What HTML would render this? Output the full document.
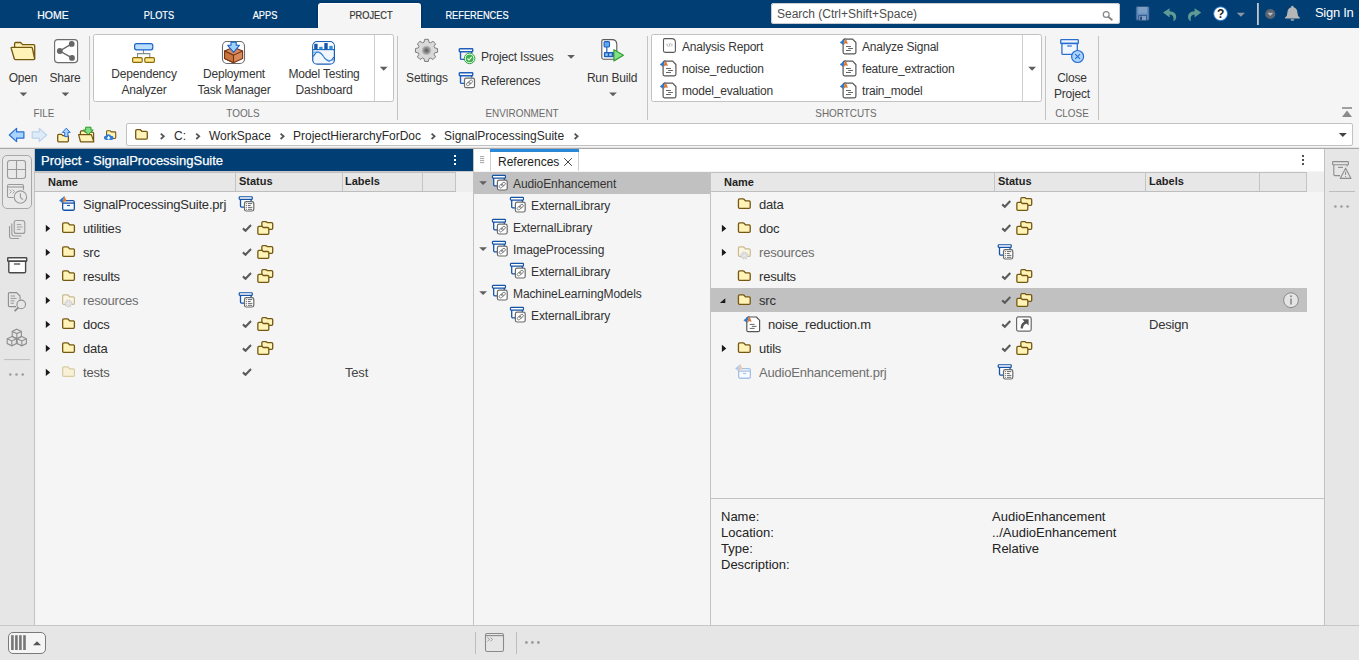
<!DOCTYPE html>
<html lang="en">
<head>
<meta charset="utf-8">
<title>Project - SignalProcessingSuite</title>
<style>
html,body{margin:0;padding:0;}
body{width:1359px;height:660px;overflow:hidden;background:#e6e6e6;font-family:"Liberation Sans",Arial,sans-serif;font-size:12px;color:#212121;position:relative;}
.a{position:absolute;}
.t{position:absolute;white-space:nowrap;line-height:16px;}
svg{position:absolute;overflow:visible;}
/* top bar */
#topbar{left:0;top:0;width:1359px;height:28px;background:#003e73;}
.tab{color:#fff;-webkit-text-stroke:0.2px currentColor;font-size:11px;line-height:16px;top:7px;text-align:center;transform:scaleX(.84);transform-origin:50% 50%;}
#acttab{left:318px;top:3px;width:103px;height:25px;background:#f5f5f5;border-radius:3px 3px 0 0;border:1px solid #fff;border-bottom:none;box-sizing:border-box;box-shadow:0 0 2px rgba(0,20,60,.7);}
#search{left:771px;top:3px;width:349px;height:21px;background:#fff;border-radius:3px;box-shadow:inset 0 0 0 1px #c9cdd2;}
/* toolstrip */
#strip{left:0;top:28px;width:1359px;height:95px;background:#f5f5f5;}
.sep{width:1px;background:#c4c4c4;top:36px;height:84px;}
.gal{background:#fff;border:1px solid #c2c2c2;border-radius:2.5px;box-sizing:border-box;top:34px;height:68px;}
.sl{font-size:11px;color:#6a6a6a;top:105px;text-align:center;transform:scaleX(.9);transform-origin:50% 50%;}
.bl{font-size:12px;color:#363636;text-align:center;letter-spacing:-0.2px;}
/* address bar */
#addr{left:0;top:123px;width:1359px;height:25px;background:#f5f5f5;}
#path{left:126px;top:123px;width:1227px;height:23px;background:#fff;border:1px solid #c2c2c2;border-radius:2px;box-sizing:border-box;}
.pt{font-size:12px;color:#2a2a2a;top:127.5px;}
/* body */
#leftbar{left:0;top:149px;width:35px;height:476px;background:#e6e6e6;}
#rightbar{left:1324px;top:149px;width:35px;height:476px;background:#e6e6e6;}
#status{left:0;top:625px;width:1359px;height:35px;background:#e6e6e6;border-top:1px solid #c6c6c6;box-sizing:border-box;}
.panel{background:#f5f5f5;}
.hdr{background:#e7e7e7;border-bottom:1px solid #bebebe;border-top:1px solid #c0c0c0;box-sizing:border-box;height:20px;top:172px;}
.hc{font-size:11px;font-weight:bold;color:#1f1f1f;top:174px;line-height:14px;}
.hd{width:1px;background:#c4c4c4;top:173px;height:18px;}
.n{font-size:13px;color:#2e2e2e;letter-spacing:-0.2px;margin-top:0.5px;}
.g{color:#6e6e6e;}
.r{font-size:12px;color:#333;letter-spacing:-0.1px;margin-top:1px;}
.d{font-size:13px;color:#222;}
</style>
</head>
<body>
<!-- ======= TOP BAR ======= -->
<div class="a" id="topbar"></div>
<div class="a" id="acttab"></div>
<span class="t tab" style="left:23px;width:60px;transform:scaleX(.95);">HOME</span>
<span class="t tab" style="left:129px;width:60px;">PLOTS</span>
<span class="t tab" style="left:235px;width:60px;">APPS</span>
<span class="t tab" style="left:331px;width:80px;color:#333;">PROJECT</span>
<span class="t tab" style="left:427px;width:100px;">REFERENCES</span>
<div class="a" id="search"></div>
<span class="t" style="left:777px;top:6px;font-size:12px;color:#4d4d4d;">Search (Ctrl+Shift+Space)</span>
<span class="t" style="left:1315px;top:5px;font-size:13px;color:#fff;letter-spacing:-0.3px;">Sign In</span>

<!-- ======= TOOLSTRIP ======= -->
<div class="a" id="strip"></div>
<div class="a sep" style="left:89px;"></div>
<div class="a sep" style="left:397px;"></div>
<div class="a sep" style="left:647px;"></div>
<div class="a sep" style="left:1045px;"></div>
<div class="a sep" style="left:1098px;"></div>
<div class="a gal" style="left:93px;width:301px;"></div>
<div class="a" style="left:374px;top:35px;width:1px;height:66px;background:#d0d0d0;"></div>
<div class="a gal" style="left:651px;width:391px;"></div>
<div class="a" style="left:1022px;top:35px;width:1px;height:66px;background:#d0d0d0;"></div>

<span class="t bl" style="left:0px;width:46px;top:70px;">Open</span>
<span class="t bl" style="left:42px;width:46px;top:70px;">Share</span>
<span class="t bl" style="left:99px;width:90px;top:66px;">Dependency</span>
<span class="t bl" style="left:99px;width:90px;top:82px;">Analyzer</span>
<span class="t bl" style="left:184px;width:100px;top:66px;">Deployment</span>
<span class="t bl" style="left:184px;width:100px;top:82px;">Task Manager</span>
<span class="t bl" style="left:274px;width:100px;top:66px;">Model Testing</span>
<span class="t bl" style="left:274px;width:100px;top:82px;">Dashboard</span>
<span class="t bl" style="left:397px;width:60px;top:70px;">Settings</span>
<span class="t bl" style="left:481px;top:48.5px;text-align:left;">Project Issues</span>
<span class="t bl" style="left:481px;top:72.5px;text-align:left;">References</span>
<span class="t bl" style="left:577px;width:70px;top:70px;">Run Build</span>
<span class="t bl" style="left:682px;top:39px;text-align:left;">Analysis Report</span>
<span class="t bl" style="left:682px;top:61px;text-align:left;">noise_reduction</span>
<span class="t bl" style="left:682px;top:83px;text-align:left;">model_evaluation</span>
<span class="t bl" style="left:862px;top:39px;text-align:left;">Analyze Signal</span>
<span class="t bl" style="left:862px;top:61px;text-align:left;">feature_extraction</span>
<span class="t bl" style="left:862px;top:83px;text-align:left;">train_model</span>
<span class="t bl" style="left:1042px;width:60px;top:70px;">Close</span>
<span class="t bl" style="left:1042px;width:60px;top:85.5px;">Project</span>

<span class="t sl" style="left:14px;width:60px;">FILE</span>
<span class="t sl" style="left:203px;width:80px;">TOOLS</span>
<span class="t sl" style="left:472px;width:100px;">ENVIRONMENT</span>
<span class="t sl" style="left:796px;width:100px;">SHORTCUTS</span>
<span class="t sl" style="left:1042px;width:60px;">CLOSE</span>

<!-- ======= ADDRESS BAR ======= -->
<div class="a" id="addr"></div>
<div class="a" id="path"></div>
<span class="t pt" style="left:174px;">C:</span>
<span class="t pt" style="left:209px;">WorkSpace</span>
<span class="t pt" style="left:293px;">ProjectHierarchyForDoc</span>
<span class="t pt" style="left:444px;">SignalProcessingSuite</span>
<div class="a" style="left:0;top:147px;width:1359px;height:1px;background:#e3e3e3;"></div><div class="a" style="left:0;top:148px;width:1359px;height:1px;background:#a9a9a9;"></div>

<!-- ======= BODY ======= -->
<div class="a" id="leftbar"></div>
<div class="a" id="rightbar"></div>
<div class="a" id="status"></div>

<!-- Project panel -->
<div class="a panel" style="left:35px;top:149px;width:438px;height:476px;"></div>
<div class="a" style="left:35px;top:149px;width:438px;height:22px;background:#003e73;"></div>
<div class="a" style="left:35px;top:171px;width:438px;height:1px;background:#c8c8c8;"></div>
<span class="t" style="left:41px;top:152.5px;font-size:13px;color:#fff;-webkit-text-stroke:0.25px #fff;">Project - SignalProcessingSuite</span>
<div class="a" style="left:35px;top:172px;width:438px;height:20px;background:#eeeeee;"></div><div class="a hdr" style="left:35px;width:421px;"></div>
<div class="a hd" style="left:235px;"></div>
<div class="a hd" style="left:342px;"></div>
<div class="a hd" style="left:422px;"></div>
<div class="a hd" style="left:455px;"></div>
<span class="t hc" style="left:48px;top:175px;">Name</span>
<span class="t hc" style="left:239px;">Status</span>
<span class="t hc" style="left:345px;">Labels</span>

<span class="t n" style="left:83px;top:196px;">SignalProcessingSuite.prj</span>
<span class="t n" style="left:83px;top:220px;">utilities</span>
<span class="t n" style="left:83px;top:244px;">src</span>
<span class="t n" style="left:83px;top:268px;">results</span>
<span class="t n g" style="left:83px;top:292px;">resources</span>
<span class="t n" style="left:83px;top:316px;">docs</span>
<span class="t n" style="left:83px;top:340px;">data</span>
<span class="t n" style="left:83px;top:364px;color:#555;">tests</span>
<span class="t n" style="left:345px;top:364px;color:#444;">Test</span>

<!-- References panel -->
<div class="a" style="left:474px;top:149px;width:850px;height:23px;background:#fff;border-bottom:1px solid #c8c8c8;box-sizing:border-box;"></div>
<div class="a" style="left:490px;top:149px;width:89px;height:22px;background:#fff;border-left:1px solid #d0d0d0;border-right:1px solid #d0d0d0;box-sizing:border-box;"></div>
<div class="a" style="left:490px;top:149px;width:89px;height:3px;background:#2b87d8;"></div>
<span class="t" style="left:498px;top:154px;font-size:12px;color:#222;">References</span>

<div class="a panel" style="left:474px;top:171px;width:237px;height:454px;"></div>
<div class="a" style="left:474px;top:172px;width:237px;height:22px;background:#c1c1c1;"></div>
<span class="t r" style="left:513px;top:175px;">AudioEnhancement</span>
<span class="t r" style="left:531px;top:197px;">ExternalLibrary</span>
<span class="t r" style="left:513px;top:219px;">ExternalLibrary</span>
<span class="t r" style="left:513px;top:241px;">ImageProcessing</span>
<span class="t r" style="left:531px;top:263px;">ExternalLibrary</span>
<span class="t r" style="left:513px;top:285px;">MachineLearningModels</span>
<span class="t r" style="left:531px;top:307px;">ExternalLibrary</span>

<div class="a" style="left:710px;top:172px;width:1px;height:453px;background:#c2c2c2;"></div>
<div class="a panel" style="left:711px;top:171px;width:613px;height:454px;"></div>
<div class="a" style="left:711px;top:172px;width:613px;height:20px;background:#eeeeee;"></div><div class="a hdr" style="left:711px;width:596px;"></div>
<div class="a hd" style="left:994px;"></div>
<div class="a hd" style="left:1145px;"></div>
<div class="a hd" style="left:1259px;"></div>
<div class="a hd" style="left:1306px;"></div>
<span class="t hc" style="left:724px;top:175px;">Name</span>
<span class="t hc" style="left:998px;">Status</span>
<span class="t hc" style="left:1149px;">Labels</span>
<div class="a" style="left:711px;top:288px;width:596px;height:24px;background:#c1c1c1;"></div>

<span class="t n" style="left:759px;top:196px;">data</span>
<span class="t n" style="left:759px;top:220px;">doc</span>
<span class="t n g" style="left:759px;top:244px;">resources</span>
<span class="t n" style="left:759px;top:268px;">results</span>
<span class="t n" style="left:759px;top:292px;">src</span>
<span class="t n" style="left:768px;top:316px;">noise_reduction.m</span>
<span class="t n" style="left:759px;top:340px;">utils</span>
<span class="t n g" style="left:759px;top:364px;">AudioEnhancement.prj</span>
<span class="t n" style="left:1149px;top:316px;color:#333;">Design</span>

<div class="a" style="left:711px;top:498px;width:613px;height:1px;background:#c2c2c2;"></div>
<span class="t d" style="left:721px;top:509px;">Name:</span>
<span class="t d" style="left:721px;top:525px;">Location:</span>
<span class="t d" style="left:721px;top:541px;">Type:</span>
<span class="t d" style="left:721px;top:557px;">Description:</span>
<span class="t d" style="left:992px;top:509px;">AudioEnhancement</span>
<span class="t d" style="left:992px;top:525px;">../AudioEnhancement</span>
<span class="t d" style="left:992px;top:541px;">Relative</span>

<div class="a" style="left:473px;top:149px;width:1px;height:476px;background:#c2c2c2;"></div>
<div class="a" style="left:34px;top:149px;width:1px;height:476px;background:#c2c2c2;"></div>
<div class="a" style="left:1324px;top:149px;width:1px;height:476px;background:#c2c2c2;"></div>

<svg class="a" style="left:0;top:0;pointer-events:none;" width="1359" height="660" viewBox="0 0 1359 660">
<defs>
<symbol id="fld" overflow="visible"><path d="M0.65,1.8Q0.65,0.65 1.8,0.65H5.4Q6,0.65 6.5,1.2L7.6,2.5H11.3Q12.4,2.5 12.4,3.6V9Q12.4,10.1 11.3,10.1H1.8Q0.65,10.1 0.65,9Z" fill="#fff3b8" stroke="#755710" stroke-width="1.3" stroke-linejoin="round"/></symbol>
<symbol id="ffld" overflow="visible"><path d="M0.65,1.8Q0.65,0.65 1.8,0.65H5.4Q6,0.65 6.5,1.2L7.6,2.5H11.3Q12.4,2.5 12.4,3.6V9Q12.4,10.1 11.3,10.1H1.8Q0.65,10.1 0.65,9Z" fill="#f8f1d8" stroke="#d8cba0" stroke-width="1.2" stroke-linejoin="round"/></symbol>
<symbol id="rfld" overflow="visible"><path d="M0.65,1.8Q0.65,0.65 1.8,0.65H5.4Q6,0.65 6.5,1.2L7.6,2.5H11.3Q12.4,2.5 12.4,3.6V9Q12.4,10.1 11.3,10.1H1.8Q0.65,10.1 0.65,9Z" fill="#faf6e1" stroke="#c9ba8e" stroke-width="1.2" stroke-linejoin="round"/><circle cx="6.5" cy="9.2" r="3.3" fill="#e9e9e9" stroke="#cfcfcf" stroke-width="1.5" stroke-dasharray="1.5 1.1"/><circle cx="6.5" cy="9.2" r="2.6" fill="#e6e6e6" stroke="#d2d2d2" stroke-width="0.6"/><circle cx="6.5" cy="9.2" r="1" fill="#f2f2f2" stroke="#d0d0d0" stroke-width="0.5"/></symbol>
<symbol id="fst" overflow="visible"><path d="M4.65,1.8Q4.65,0.65 5.8,0.65H8.6L9.9,1.7H14.4Q15.5,1.7 15.5,2.8V7.4Q15.5,8.5 14.4,8.5H5.8Q4.65,8.5 4.65,7.4Z" fill="#fff3b8" stroke="#755710" stroke-width="1.3" stroke-linejoin="round"/><path d="M0.65,6.6Q0.65,5.45 1.8,5.45H4.8L6.1,6.6H10.5Q11.6,6.6 11.6,7.7V12.3Q11.6,13.4 10.5,13.4H1.8Q0.65,13.4 0.65,12.3Z" fill="#fff3b8" stroke="#755710" stroke-width="1.3" stroke-linejoin="round"/></symbol>
<symbol id="chk" overflow="visible"><path d="M0.9,4.2L3.5,6.5L9,0.9" fill="none" stroke="#5a5a5a" stroke-width="2.1"/></symbol>
<symbol id="pbox" overflow="visible"><path d="M1.9,3.1V10Q1.9,11 2.9,11H12.5V3.1Z" fill="#fbfdff"/><rect x="0.65" y="0.65" width="13" height="2.6" rx="0.6" fill="#fff" stroke="#1553a8" stroke-width="1.2"/><path d="M1.9,3.1V10Q1.9,11 2.9,11H6M12.5,3.1V5.5" fill="none" stroke="#1553a8" stroke-width="1.3"/></symbol>
<symbol id="pdef" overflow="visible"><use href="#pbox"/><rect x="5.9" y="5.6" width="9.3" height="9.3" rx="1.8" fill="#fff" stroke="#6a6a6a" stroke-width="1.2"/><path d="M7.3,7.5h0.9M7.3,9.4h0.9M7.3,11.3h0.9M7.3,13.2h0.9" stroke="#4a4a4a" stroke-width="0.9"/><path d="M9.3,7.5h4.4M9.3,9.4h2.7M9.3,11.3h4.4M9.3,13.2h4.4" stroke="#5a5a5a" stroke-width="0.9"/></symbol>
<symbol id="pref" overflow="visible"><use href="#pbox"/><rect x="5.6" y="5.3" width="9.8" height="9.9" rx="1.8" fill="#fff" stroke="#6a6a6a" stroke-width="1.2"/><g transform="rotate(-40 10.5 10.3)" fill="none" stroke="#777" stroke-width="0.9"><rect x="6.9" y="8.9" width="4.4" height="2.8" rx="1.4"/><rect x="9.7" y="8.9" width="4.4" height="2.8" rx="1.4"/></g></symbol>
<symbol id="prj" overflow="visible"><rect x="3.65" y="4.55" width="11.7" height="9.7" rx="1.6" fill="#f4f9ff" stroke="#1553a8" stroke-width="1.3"/><path d="M3.65,7.1H15.35" stroke="#1553a8" stroke-width="1.3"/><path d="M8.1,9.5H11" stroke="#1553a8" stroke-width="1.1"/><path d="M0.1,4.4L5.6,0.1L3.2,6.9Z" fill="#1e7be0"/><path d="M5.6,0.1L7.6,5.5L5.6,5.2L3.2,6.9Z" fill="#f07a24"/></symbol>
<symbol id="prjf" overflow="visible"><rect x="3.65" y="4.55" width="11.7" height="9.7" rx="1.6" fill="#f8fbff" stroke="#a5c1e6" stroke-width="1.3"/><path d="M3.65,7.1H15.35" stroke="#a5c1e6" stroke-width="1.3"/><path d="M8.1,9.5H11" stroke="#a5c1e6" stroke-width="1.1"/><path d="M0.1,4.4L5.6,0.1L3.2,6.9Z" fill="#a9cdf2"/><path d="M5.6,0.1L7.6,5.5L5.6,5.2L3.2,6.9Z" fill="#f6c6a2"/></symbol>
<symbol id="mfl" overflow="visible"><path d="M4.6,1.1H12.6L15.9,4.5V14.3Q15.9,15.8 14.4,15.8H4.6Q3.1,15.8 3.1,14.3V2.6Q3.1,1.1 4.6,1.1Z" fill="#fff" stroke="#555" stroke-width="1.2" stroke-linejoin="round"/><path d="M6,8.5H10.9M8.2,10.5H12.9M6,12.5H10.9" stroke="#555" stroke-width="0.9"/><path d="M0,4.4L5.4,0.1L3.2,6.7Z" fill="#1e7be0"/><path d="M5.4,0.1L7.6,5.6L5.5,5.2L3.2,6.7Z" fill="#f07a24"/><path d="M0,4.4L5.4,0.1L7.6,5.6L5.5,5.2L3.2,6.7Z" fill="none" stroke="#6a5a50" stroke-width="0.3"/></symbol>
<symbol id="sct" overflow="visible"><rect x="0.6" y="0.6" width="14.6" height="14.2" rx="1.8" fill="#fff" stroke="#6a6a6a" stroke-width="1.2"/><path d="M6.2,2.9H12.6V9.3L10.5,7.2Q7.2,8.2 6.9,12.3H4.6Q4.4,6.9 8.4,5.1Z" fill="#555"/></symbol>
<symbol id="ar" overflow="visible"><path d="M0,0L4.4,3.6L0,7.2Z" fill="#1a1a1a"/></symbol>
<symbol id="ad" overflow="visible"><path d="M0,0H7.8L3.9,3.9Z" fill="#606060"/></symbol>
<symbol id="ae" overflow="visible"><path d="M5.4,0V4.8H0Z" fill="#1a1a1a"/></symbol>
</defs>

<!-- project panel tree -->
<use href="#prj" x="59" y="196"/>
<use href="#pdef" x="238.6" y="196.1"/>
<g id="lrows">
<use href="#ar" x="45.8" y="224.8"/><use href="#fld" x="62" y="222.3"/><use href="#chk" x="242" y="224.2"/><use href="#fst" x="257.2" y="220.9"/>
<use href="#ar" x="45.8" y="248.8"/><use href="#fld" x="62" y="246.3"/><use href="#chk" x="242" y="248.2"/><use href="#fst" x="257.2" y="244.9"/>
<use href="#ar" x="45.8" y="272.8"/><use href="#fld" x="62" y="270.3"/><use href="#chk" x="242" y="272.2"/><use href="#fst" x="257.2" y="268.9"/>
<use href="#ar" x="45.8" y="296.8"/><use href="#rfld" x="62" y="294.3"/><use href="#pdef" x="238.6" y="292.1"/>
<use href="#ar" x="45.8" y="320.8"/><use href="#fld" x="62" y="318.3"/><use href="#chk" x="242" y="320.2"/><use href="#fst" x="257.2" y="316.9"/>
<use href="#ar" x="45.8" y="344.8"/><use href="#fld" x="62" y="342.3"/><use href="#chk" x="242" y="344.2"/><use href="#fst" x="257.2" y="340.9"/>
<use href="#ar" x="45.8" y="368.8"/><use href="#ffld" x="62" y="366.3"/><use href="#chk" x="242" y="368.2"/>
</g>

<!-- references tree -->
<use href="#ad" x="479.2" y="181.2"/><use href="#pref" x="491.8" y="174.8"/>
<use href="#pref" x="509.8" y="196.8"/>
<use href="#pref" x="491.8" y="218.8"/>
<use href="#ad" x="479.2" y="247.2"/><use href="#pref" x="491.8" y="240.8"/>
<use href="#pref" x="509.8" y="262.8"/>
<use href="#ad" x="479.2" y="291.2"/><use href="#pref" x="491.8" y="284.8"/>
<use href="#pref" x="509.8" y="306.8"/>

<!-- right files -->
<use href="#fld" x="737.8" y="198.3"/><use href="#chk" x="1001.3" y="200.2"/><use href="#fst" x="1016.2" y="196.9"/>
<use href="#ar" x="721.9" y="224.8"/><use href="#fld" x="737.8" y="222.3"/><use href="#chk" x="1001.3" y="224.2"/><use href="#fst" x="1016.2" y="220.9"/>
<use href="#ar" x="721.9" y="248.8"/><use href="#rfld" x="737.8" y="246.3"/><use href="#pdef" x="997.6" y="244.1"/>
<use href="#fld" x="737.8" y="270.3"/><use href="#chk" x="1001.3" y="272.2"/><use href="#fst" x="1016.2" y="268.9"/>
<use href="#ae" x="719.9" y="298.3"/><use href="#fld" x="737.8" y="294.3"/><use href="#chk" x="1001.3" y="296.2"/><use href="#fst" x="1016.2" y="292.9"/>
<use href="#mfl" x="743.7" y="315.9"/><use href="#chk" x="1001.3" y="320.2"/><use href="#sct" x="1016" y="316.3"/>
<use href="#ar" x="721.9" y="344.8"/><use href="#fld" x="737.8" y="342.3"/><use href="#chk" x="1001.3" y="344.2"/><use href="#fst" x="1016.2" y="340.9"/>
<use href="#prjf" x="735" y="364"/><use href="#pdef" x="997.6" y="364.1"/>
<!-- ===== toolstrip icons ===== -->
<!-- open folder -->
<path d="M14.6,59.3V43.6Q14.6,42.5 15.7,42.5H20.6L22.6,44.6H33.6Q34.7,44.6 34.7,45.7V58.8" fill="#fff3b8" stroke="#755710" stroke-width="1.3" stroke-linejoin="round"/>
<path d="M11.6,47.4H31.3Q32.2,47.4 32.4,48.3L34.6,58.6Q34.8,59.6 33.8,59.6H15.4Q14.5,59.6 14.3,58.7L11.2,48.2Q11,47.4 11.6,47.4Z" fill="#fff3b8" stroke="#755710" stroke-width="1.3" stroke-linejoin="round"/>
<!-- share -->
<rect x="54.6" y="39.6" width="23" height="23" rx="3" fill="#fff" stroke="#6b6b6b" stroke-width="1.1"/>
<path d="M71.7,43.9L59.8,51L72,57.9" fill="none" stroke="#666" stroke-width="1.4"/>
<circle cx="71.7" cy="43.9" r="2.9" fill="#666"/><circle cx="59.8" cy="51" r="2.9" fill="#666"/><circle cx="72" cy="57.9" r="2.9" fill="#666"/>
<!-- small arrows under Open/Share/Run Build -->
<path d="M19.6,92.4H27.2L23.4,96.2Z" fill="#5e5e5e"/>
<path d="M61.6,92.4H69.2L65.4,96.2Z" fill="#5e5e5e"/>
<path d="M609.2,92.4H616.8L613,96.2Z" fill="#5e5e5e"/>
<path d="M567.3,54.9H574.9L571.1,58.7Z" fill="#5e5e5e"/>
<path d="M379.8,66.8H387.6L383.7,70.7Z" fill="#5e5e5e"/>
<path d="M1028.2,66.8H1036L1032.1,70.7Z" fill="#5e5e5e"/>
<!-- dependency analyzer -->
<path d="M143.5,50V53.6M137.5,57V53.6H149.8V57" fill="none" stroke="#8a8a8a" stroke-width="1.1"/>
<rect x="134.6" y="43.6" width="18.2" height="6.2" rx="2" fill="#b9deff" stroke="#1a62c4" stroke-width="1.2"/>
<rect x="132.6" y="57.6" width="9.6" height="4.8" rx="1.2" fill="#ffe98a" stroke="#8a6a08" stroke-width="1.2"/>
<rect x="144.8" y="57.6" width="9.6" height="4.8" rx="1.2" fill="#ffe98a" stroke="#8a6a08" stroke-width="1.2"/>
<!-- deployment -->
<rect x="222.5" y="41.5" width="22" height="22" rx="4.5" fill="#fff" stroke="#6b6b6b" stroke-width="1.1"/>
<path d="M224.6,51L233.5,47.2L242.6,51V58.4L233.5,62.8L224.6,58.4Z" fill="#d98a5c" stroke="#7a3412" stroke-width="1.1" stroke-linejoin="round"/>
<path d="M224.6,51L233.5,55.2L242.6,51M233.5,55.2V62.8" fill="none" stroke="#7a3412" stroke-width="1.1"/>
<path d="M224.6,51L233.5,55.2V62.8L224.6,58.4Z" fill="#c8763f" stroke="#7a3412" stroke-width="1.1" stroke-linejoin="round"/>
<path d="M231,42.1H236.2V45.3H239.4L233.6,52.4L227.7,45.3H231Z" fill="#9fd2ff" stroke="#1a62c4" stroke-width="1.1" stroke-linejoin="round"/>
<!-- model testing dashboard -->
<rect x="312.7" y="41.6" width="21.7" height="22.6" rx="4.5" fill="#f1f7fd" stroke="#1a5fb4" stroke-width="1.2"/>
<path d="M313.3,49.5V46Q313.3,42.2 317,42.2H330Q333.8,42.2 333.8,46V49.5Z" fill="#fff"/>
<path d="M313,49.6H334" stroke="#1a5fb4" stroke-width="1.1"/>
<rect x="314.2" y="43.8" width="3.4" height="5.6" fill="#1756a9"/><rect x="319.2" y="46.8" width="3.4" height="2.6" fill="#2a8fe0"/><rect x="324.3" y="43" width="3.4" height="6.4" fill="#1756a9"/><rect x="329.3" y="45.8" width="3.4" height="3.6" fill="#2a8fe0"/>
<path d="M313.3,56.5C317,49.5 320,51.5 323.5,56.5S330,63.5 333.8,57" fill="none" stroke="#1a5fb4" stroke-width="1.1"/>
<path d="M313.3,52.6C318,50.8 321,53.5 324,57S330,61.5 333.8,59.5" fill="none" stroke="#3d9be6" stroke-width="1"/>
<!-- gear -->
<g transform="translate(426.5 50.4) scale(0.97)">
<path id="gearp" d="M-1.9,-11.4H1.9L2.6,-8.4L4.1,-7.8L6.7,-9.4L9.4,-6.7L7.8,-4.1L8.4,-2.6L11.4,-1.9V1.9L8.4,2.6L7.8,4.1L9.4,6.7L6.7,9.4L4.1,7.8L2.6,8.4L1.9,11.4H-1.9L-2.6,8.4L-4.1,7.8L-6.7,9.4L-9.4,6.7L-7.8,4.1L-8.4,2.6L-11.4,1.9V-1.9L-8.4,-2.6L-7.8,-4.1L-9.4,-6.7L-6.7,-9.4L-4.1,-7.8L-2.6,-8.4Z" fill="#d9d9d9" stroke="#7a7a7a" stroke-width="1" stroke-linejoin="round"/>
<circle r="4.8" fill="#b4b4b4"/><circle r="3.4" fill="#8e8e8e"/><circle r="2" fill="#6a6a6a"/>
</g>
<!-- project issues -->
<g transform="translate(458.6 48)"><rect x="0.7" y="0.7" width="13.4" height="3" rx="0.6" fill="#fff" stroke="#1f5fbd" stroke-width="1.4"/><path d="M1.9,3.7V10.4Q1.9,11.4 2.9,11.4H6M13,3.7V5.5" fill="none" stroke="#1f5fbd" stroke-width="1.4"/>
<circle cx="11" cy="10.4" r="5.3" fill="#fff" stroke="#2f9e3c" stroke-width="1"/><circle cx="11" cy="10.4" r="3.9" fill="#3db54a"/><path d="M8.9,10.5L10.4,12L13.1,8.9" fill="none" stroke="#fff" stroke-width="1.1"/></g>
<!-- references (toolstrip) -->
<g transform="translate(458.6 72)"><rect x="0.7" y="0.7" width="13.4" height="3" rx="0.6" fill="#fff" stroke="#1f5fbd" stroke-width="1.4"/><path d="M1.9,3.7V10.4Q1.9,11.4 2.9,11.4H6M13,3.7V5.5" fill="none" stroke="#1f5fbd" stroke-width="1.4"/>
<rect x="5.9" y="6.1" width="10" height="9.6" rx="1.8" fill="#fff" stroke="#6a6a6a" stroke-width="1.2"/><g transform="rotate(-40 10.9 10.9)" fill="none" stroke="#777" stroke-width="0.9"><rect x="7.3" y="9.5" width="4.4" height="2.8" rx="1.4"/><rect x="10.1" y="9.5" width="4.4" height="2.8" rx="1.4"/></g></g>
<!-- run build -->
<path d="M603.4,39.6H612Q616.8,39.6 616.8,44.6V57.6Q616.8,59.2 615.2,59.2H603.4Q601.8,59.2 601.8,57.6V41.2Q601.8,39.6 603.4,39.6Z" fill="#fff" stroke="#5a5a5a" stroke-width="1.1"/>
<path d="M606.8,47V52" stroke="#1f5fbd" stroke-width="1.2"/>
<rect x="604.1" y="41.6" width="5.4" height="5.4" rx="1" fill="#62aaf0" stroke="#1f5fbd" stroke-width="1.1"/>
<rect x="603.9" y="52" width="10.4" height="5.2" rx="0.8" fill="#1f5fbd"/><rect x="605.3" y="53.4" width="2.4" height="2.4" fill="#9fd0ff"/><rect x="609.3" y="53.4" width="2.4" height="2.4" fill="#9fd0ff"/>
<path d="M613.9,49.6L623.4,55.3L613.9,61Z" fill="#86e086" stroke="#2a9a2a" stroke-width="1.1" stroke-linejoin="round"/>
<!-- shortcuts docs -->
<g id="htm"><path d="M664.6,38.6H671.6Q675.4,38.6 675.4,42.4V50.8Q675.4,52.4 673.8,52.4H665.1Q663.5,52.4 663.5,50.8V39.7Q663.5,38.6 664.6,38.6Z" fill="#fff" stroke="#5a5a5a" stroke-width="1.1"/>
<path d="M668,43.6L666.6,45L668,46.4M671,43.6L672.4,45L671,46.4M670.1,43.3L668.9,46.7" fill="none" stroke="#8a8a8a" stroke-width="0.7"/></g>
<use href="#mfl" x="660" y="60"/>
<use href="#mfl" x="660" y="82"/>
<use href="#mfl" x="840" y="38"/>
<use href="#mfl" x="840" y="60"/>
<use href="#mfl" x="840" y="82"/>
<!-- close project -->
<rect x="1060.7" y="39.7" width="17.6" height="3.8" rx="0.6" fill="#f2f7ff" stroke="#2a6fd0" stroke-width="1.3"/>
<path d="M1061.9,43.5V53.4Q1061.9,54.4 1062.9,54.4H1076.3Q1077.3,54.4 1077.3,53.4V43.5Z" fill="#f2f7ff" stroke="#2a6fd0" stroke-width="1.3"/>
<path d="M1067.2,46H1071.8" stroke="#2a6fd0" stroke-width="1.2"/>
<circle cx="1077.6" cy="56.5" r="6" fill="#aad3ff" stroke="#2a6fd0" stroke-width="1.2"/>
<path d="M1075.2,54.1L1080,58.9M1080,54.1L1075.2,58.9" stroke="#2a6fd0" stroke-width="1.1"/>
<!-- collapse toolstrip -->
<path d="M1342,108H1352" stroke="#8a8a8a" stroke-width="1.6"/><path d="M1342,117L1347,110.5L1352,117Z" fill="#8a8a8a"/>
<!-- ===== top right ===== -->
<g fill="none" stroke="#858585" stroke-width="1.2"><circle cx="1106.2" cy="14.5" r="2.9"/><path d="M1108.3,16.8L1112.4,20.2" stroke-width="1.8"/></g>
<!-- save -->
<rect x="1136.1" y="6.6" width="13" height="13.6" rx="1" fill="#5b8ac0" stroke="#2c4d78" stroke-width="0.7"/>
<rect x="1138.2" y="7" width="8.8" height="6.6" fill="#7d9fc4"/>
<rect x="1138.4" y="15.2" width="8.6" height="5" fill="#2c4d78"/><rect x="1139.2" y="15.9" width="7" height="4.3" fill="#7d9fc4"/><rect x="1140" y="16.6" width="2" height="3.6" fill="#2c4d78"/>
<!-- undo / redo -->
<path d="M1163,12.6L1169.6,8.2V11.2Q1176.6,11.6 1176.2,17.4Q1175.8,20.4 1173.4,21.2Q1174.6,15 1169.6,14.6V17.4Z" fill="#5f9a94"/>
<path d="M1201.2,12.6L1194.6,8.2V11.2Q1187.6,11.6 1188,17.4Q1188.4,20.4 1190.8,21.2Q1189.6,15 1194.6,14.6V17.4Z" fill="#5f9a94"/>
<!-- help -->
<circle cx="1220.6" cy="13.7" r="6.9" fill="#fff" stroke="#2a7ad6" stroke-width="0.9"/>
<text x="1220.6" y="18" font-family="Liberation Sans, Arial, sans-serif" font-size="12" font-weight="bold" fill="#222" text-anchor="middle">?</text>
<path d="M1236.8,12.8H1245L1240.9,16.7Z" fill="#8d98a6"/>
<rect x="1257" y="3" width="1.8" height="22" fill="#c2c7cd"/>
<circle cx="1270.3" cy="14" r="5.1" fill="#5d6670"/><path d="M1267.4,12.8H1273.2L1270.3,16Z" fill="#b8bec6"/>
<!-- bell -->
<path d="M1292.4,5.8Q1293.6,5.8 1293.6,7.2Q1297.4,8.4 1297.4,12.6Q1297.4,16.2 1299.8,17.6V18.4H1285V17.6Q1287.4,16.2 1287.4,12.6Q1287.4,8.4 1291.2,7.2Q1291.2,5.8 1292.4,5.8Z" fill="#b4b6b8"/>
<path d="M1290.4,19.2H1294.4Q1294.2,20.8 1292.4,20.8Q1290.6,20.8 1290.4,19.2Z" fill="#b4b6b8"/>

<!-- ===== address bar ===== -->
<path d="M9.3,135L16.6,128.4V131.9H23.9V138.1H16.6V141.6Z" fill="#a8d4ff" stroke="#2a6fd0" stroke-width="1.2" stroke-linejoin="round"/>
<path d="M46.6,135L39.3,128.4V131.9H32.2V138.1H39.3V141.6Z" fill="#deebf9" stroke="#bcd2ea" stroke-width="1.2" stroke-linejoin="round"/>
<!-- up folder -->
<path d="M57.7,135.4Q57.7,134.4 58.7,134.4H61.6L62.8,135.6H67.4Q68.4,135.6 68.4,136.6V140.8Q68.4,141.8 67.4,141.8H58.7Q57.7,141.8 57.7,140.8Z" fill="#fff3b8" stroke="#755710" stroke-width="1.3" stroke-linejoin="round"/>
<path d="M66.3,128.2L70.2,132.4H67.9V136.6H64.7V132.4H62.4Z" fill="#a8d4ff" stroke="#2a6fd0" stroke-width="1" stroke-linejoin="round"/>
<!-- folder with green arrow -->
<path d="M80.4,141.6V131.9Q80.4,130.9 81.4,130.9H84.2L85.4,132.1H92.6Q93.6,132.1 93.6,133.1V141" fill="#fff3b8" stroke="#755710" stroke-width="1.2" stroke-linejoin="round"/>
<path d="M85.6,127.2H91V130H93.2L88.3,134.6L83.4,130H85.6Z" fill="#7fdc7f" stroke="#2a9a2a" stroke-width="1" stroke-linejoin="round"/>
<path d="M78.6,134.6H91.4L93.8,141.9H80.6Z" fill="#fff3b8" stroke="#755710" stroke-width="1.2" stroke-linejoin="round"/>
<!-- cloud folder -->
<path d="M106.6,138.4V131.6Q106.6,130.7 107.5,130.7H110L111.2,131.9H114.8Q115.7,131.9 115.7,132.8V137.6Q115.7,138.5 114.8,138.5Z" fill="#fff3b8" stroke="#755710" stroke-width="1.1" stroke-linejoin="round"/>
<path d="M106.2,139.9Q103.9,139.9 103.9,137.8Q103.9,136 105.8,135.8Q106.4,134.2 108.4,134.2Q110.4,134.2 111,135.8Q113.6,135.8 113.6,137.9Q113.6,139.9 111.4,139.9Z" fill="#2a7ad6"/>
<path d="M108.6,135.8L110.6,138.4H109.4V139.6H107.8V138.4H106.6Z" fill="#fff"/>
<!-- path folder and chevrons -->
<path d="M135.7,130.8Q135.7,129.7 136.8,129.7H140.4L141.8,131.3H146.2Q147.3,131.3 147.3,132.4V138Q147.3,139.1 146.2,139.1H136.8Q135.7,139.1 135.7,138Z" fill="#fff3b8" stroke="#755710" stroke-width="1.3" stroke-linejoin="round"/>
<g fill="none" stroke="#555" stroke-width="1.8"><path d="M160.8,133.6L163.8,136.3L160.8,139"/><path d="M196.2,133.6L199.2,136.3L196.2,139"/><path d="M280.6,133.6L283.6,136.3L280.6,139"/><path d="M431.6,133.6L434.6,136.3L431.6,139"/><path d="M574.6,133.6L577.6,136.3L574.6,139"/></g>
<path d="M1338.8,133H1346.8L1342.8,137Z" fill="#444"/>

<!-- ===== panel chrome ===== -->
<g fill="#fff"><rect x="454" y="155" width="2" height="2"/><rect x="454" y="159" width="2" height="2"/><rect x="454" y="163" width="2" height="2"/></g>
<g fill="#505050"><rect x="1302" y="155" width="2" height="2"/><rect x="1302" y="159" width="2" height="2"/><rect x="1302" y="163" width="2" height="2"/></g>
<path d="M480,156.6H484.2M480,158.6H484.2M480,160.6H484.2M480,162.6H484.2" stroke="#9a9a9a" stroke-width="0.9"/>
<path d="M564.2,158.2L571.8,165.8M571.8,158.2L564.2,165.8" stroke="#444" stroke-width="1"/>
<!-- info -->
<circle cx="1291" cy="300.2" r="7.4" fill="#e4e4e4" stroke="#8a8a8a" stroke-width="1"/>
<path d="M1291,298.6V304.4" stroke="#8a8a8a" stroke-width="1.6"/><circle cx="1291" cy="296.2" r="1" fill="#8a8a8a"/>

<!-- ===== left sidebar ===== -->
<rect x="2.5" y="155.5" width="29" height="53" rx="4.5" fill="#e9e9e9" stroke="#a8a8a8" stroke-width="1"/>
<g fill="none" stroke="#9a9a9a" stroke-width="1.1">
<rect x="7.5" y="160.5" width="18" height="18" rx="2.5"/><path d="M16.5,160.5V178.5M7.5,169.5H25.5"/>
<path d="M13.5,197.5H9Q7.5,197.5 7.5,196V186Q7.5,184.5 9,184.5H22Q23.5,184.5 23.5,186V190"/><path d="M7.5,187H23.5"/>
<path d="M9.5,189.5L11.5,191.5L9.5,193.5M12.5,189.5L14.5,191.5L12.5,193.5" stroke-width="0.9"/>
<circle cx="20.4" cy="197.1" r="6.2" fill="#e9e9e9"/><path d="M20.4,193.2V197.4L23,199.6"/>
<!-- docs -->
<path d="M9.5,226V236Q9.5,238.5 12,238.5H19M11.8,223.5V233.6Q11.8,236 14.2,236H21.4"/>
<path d="M16.2,220.5H22Q24.8,220.5 24.8,223.4V231.4Q24.8,233.4 22.8,233.4H16.2Q14.2,233.4 14.2,231.4V222.5Q14.2,220.5 16.2,220.5Z" fill="#e6e6e6"/>
<path d="M16.8,224.6H21.2M16.8,227H22.6M16.8,229.4H20.6" stroke-width="0.9"/>
</g>
<!-- archive -->
<rect x="7.7" y="257.7" width="19" height="3.6" rx="0.6" fill="#fff" stroke="#4a4a4a" stroke-width="1.4"/>
<path d="M8.8,261.3V271.6Q8.8,272.8 10,272.8H24.4Q25.6,272.8 25.6,271.6V261.3Z" fill="#fff" stroke="#4a4a4a" stroke-width="1.4"/>
<path d="M14,264H20.2" stroke="#4a4a4a" stroke-width="1.3"/>
<g fill="none" stroke="#8e8e8e" stroke-width="1.1">
<!-- doc + magnifier -->
<path d="M16,306.6H9.6Q8.4,306.6 8.4,305.4V293.8Q8.4,292.6 9.6,292.6H16.6L20,296V299.6"/>
<path d="M10.6,296H15M10.6,298.4H16.6M10.6,300.8H14.6M10.6,303.2H14" stroke-width="0.9"/>
<circle cx="21.2" cy="304.4" r="4.3" fill="#e6e6e6"/><path d="M18.2,307.6L14.6,311.2" stroke-width="1.8"/>
<!-- cubes -->
<path d="M16.8,329.2L21.4,331.4V336.4L16.8,338.6L12.2,336.4V331.4Z"/><path d="M12.2,331.4L16.8,333.6L21.4,331.4M16.8,333.6V338.6"/>
<path d="M11.8,336.6L16.4,338.8V343.6L11.8,345.8L7.2,343.6V338.8Z"/><path d="M7.2,338.8L11.8,341L16.4,338.8M11.8,341V345.8"/>
<path d="M21.8,336.6L26.4,338.8V343.6L21.8,345.8L17.2,343.6V338.8Z"/><path d="M17.2,338.8L21.8,341L26.4,338.8M21.8,341V345.8"/>
</g>
<path d="M4,359.6H30" stroke="#bdbdbd" stroke-width="1"/>
<g fill="#9c9c9c"><circle cx="10.3" cy="374.5" r="1.3"/><circle cx="16.5" cy="374.5" r="1.3"/><circle cx="22.7" cy="374.5" r="1.3"/></g>

<!-- ===== right sidebar ===== -->
<g fill="none" stroke="#8e8e8e" stroke-width="1.1">
<rect x="1332.6" y="161.6" width="15.8" height="3.2" rx="0.6"/><path d="M1333.8,164.8V174.6Q1333.8,175.6 1334.8,175.6H1340M1347.2,164.8V166.6"/><path d="M1338,167.4H1343"/>
<path d="M1345.6,168.2L1351,178.4H1340.2Z" fill="#e6e6e6" stroke-linejoin="round"/><path d="M1345.6,171.6V175" stroke-width="1"/>
</g><circle cx="1345.6" cy="176.6" r="0.6" fill="#8e8e8e"/>
<path d="M1329,191.5H1355" stroke="#bdbdbd" stroke-width="1"/>
<g fill="#9c9c9c"><circle cx="1335.4" cy="206.5" r="1.3"/><circle cx="1341.5" cy="206.5" r="1.3"/><circle cx="1347.6" cy="206.5" r="1.3"/></g>

<!-- ===== status bar ===== -->
<rect x="8.5" y="632.5" width="37" height="21" rx="4.5" fill="#f5f5f5" stroke="#7a7a7a" stroke-width="1"/>
<g fill="#777"><rect x="11.1" y="635.2" width="2.6" height="14.8"/><rect x="15.1" y="635.2" width="2.6" height="14.8"/><rect x="19.1" y="635.2" width="2.6" height="14.8"/><rect x="23.2" y="635.2" width="2.6" height="14.8"/></g>
<path d="M33,645.2H41L37,641.2Z" fill="#555"/>
<path d="M475.5,632V654M516.5,632V654" stroke="#bdbdbd" stroke-width="1"/>
<g fill="none" stroke="#8a8a8a" stroke-width="1.1"><rect x="485.5" y="633.5" width="18" height="18" rx="1.8"/><path d="M485.5,635.6H503.5"/><path d="M487.4,637.4L489.6,639.4L487.4,641.4M490.4,637.4L492.6,639.4L490.4,641.4" stroke-width="0.8"/></g>
<g fill="#9c9c9c"><circle cx="526.4" cy="642.5" r="1.4"/><circle cx="532.4" cy="642.5" r="1.4"/><circle cx="538.4" cy="642.5" r="1.4"/></g>


</svg>

</body>
</html>
